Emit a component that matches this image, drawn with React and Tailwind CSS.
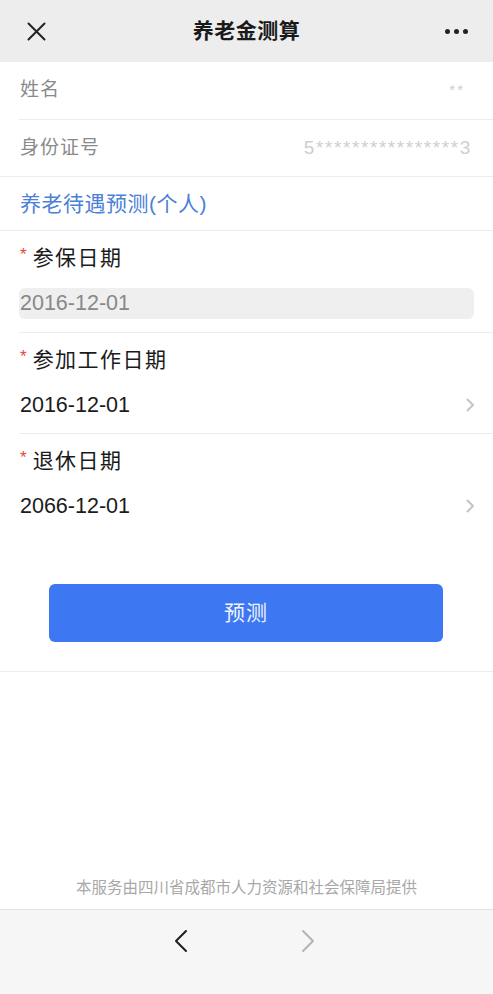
import React from "react";

const font = {
  fontFamily: '"Liberation Sans", "Noto Sans CJK SC", sans-serif',
};

const Chevron = () => (
  <svg width="9" height="14" viewBox="0 0 9 14" fill="none">
    <path d="M1.5 1.5 L7 7 L1.5 12.5" stroke="#c4c4c4" strokeWidth="2" strokeLinecap="round" strokeLinejoin="round" />
  </svg>
);

const Label = ({ children }) => (
  <div className="flex items-center h-[30px]">
    <span className="text-[#e5473c] text-[17px] leading-none ml-[1px] mr-[6px] -mt-[8px]">*</span>
    <span className="text-[21px] text-[#1b1b1b] tracking-[1.5px]">{children}</span>
  </div>
);

const DateRow = ({ label, value, divider }) => (
  <div className="pl-[19px]">
    <div className={`pt-[12px] pb-[13px] pr-[18px] ${divider ? "border-b border-[#ececec]" : ""}`}>
      <Label>{label}</Label>
      <div className="mt-[15px] h-[30px] flex items-center justify-between">
        <span className="text-[21.5px] text-[#1b1b1b] pl-px">{value}</span>
        <Chevron />
      </div>
    </div>
  </div>
);

export default function App() {
  return (
    <div className="h-[994px] flex flex-col bg-white" style={font}>
      {/* Header */}
      <div className="h-[62px] bg-[#ededed] flex items-center justify-between shrink-0">
        <div className="w-[80px] pl-[27px] flex items-center">
          <svg width="19" height="19" viewBox="0 0 19 19">
            <path d="M1.5 1.5 L17.5 17.5 M17.5 1.5 L1.5 17.5" stroke="#222" strokeWidth="2" strokeLinecap="round" />
          </svg>
        </div>
        <div className="text-[21px] font-bold text-[#1a1a1a] tracking-[0.5px]">养老金测算</div>
        <div className="w-[80px] pr-[25px] flex justify-end gap-[4px]">
          <span className="w-[5px] h-[5px] rounded-full bg-[#222]" />
          <span className="w-[5px] h-[5px] rounded-full bg-[#222]" />
          <span className="w-[5px] h-[5px] rounded-full bg-[#222]" />
        </div>
      </div>

      {/* Personal info */}
      <div className="pl-[19px]">
        <div className="h-[58px] flex items-center justify-between pl-px pr-[28px] border-b border-[#ececec]">
          <span className="text-[19px] text-[#8a8a8a] tracking-[1px]">姓名</span>
          <span className="text-[15px] text-[#cfcfcf] tracking-[2px]">**</span>
        </div>
      </div>
      <div className="h-[57px] flex items-center justify-between pl-[20px] pr-[21px] border-b border-[#ececec]">
        <span className="text-[19px] text-[#8a8a8a] tracking-[1px]">身份证号</span>
        <span className="text-[19px] text-[#cfcfcf] tracking-[1.6px]">5****************3</span>
      </div>
      <div className="h-[54px] flex items-center pl-[20px] border-b border-[#ececec]">
        <span className="text-[21px] text-[#4a80d8] tracking-[0.5px]">养老待遇预测(个人)</span>
      </div>

      {/* 参保日期 */}
      <div className="pl-[19px]">
        <div className="pt-[12px] pb-[13px] border-b border-[#ececec]">
          <Label>参保日期</Label>
          <div className="mt-[15px] mr-[19px] h-[31px] rounded-[6px] bg-[#efefef] flex items-center pl-px">
            <span className="text-[21.5px] text-[#888]">2016-12-01</span>
          </div>
        </div>
      </div>

      <DateRow label="参加工作日期" value="2016-12-01" divider />
      <DateRow label="退休日期" value="2066-12-01" />

      {/* Button */}
      <div className="pt-[50px] pb-[29px] border-b border-[#ececec]">
        <button className="ml-[49px] w-[394px] h-[58px] rounded-[6px] bg-[#3d78f2] text-[21px] text-[#eef3fe] tracking-[1px]">
          预测
        </button>
      </div>

      <div className="flex-1" />

      {/* Footer */}
      <div className="h-[20px] leading-[20px] text-center text-[15.5px] text-[#a8a8a8] mb-[11px]">
        本服务由四川省成都市人力资源和社会保障局提供
      </div>
      <div className="h-[85px] bg-[#f6f6f6] border-t border-[#e2e2e2] shrink-0 flex justify-center pt-[19px] gap-[113px]">
        <svg width="14" height="24" viewBox="0 0 14 24" className="-ml-[4px]">
          <path d="M12 2 L2 12 L12 22" stroke="#1f1f1f" strokeWidth="2" fill="none" strokeLinecap="round" strokeLinejoin="round" />
        </svg>
        <svg width="14" height="24" viewBox="0 0 14 24">
          <path d="M2 2 L12 12 L2 22" stroke="#b4b4b4" strokeWidth="2" fill="none" strokeLinecap="round" strokeLinejoin="round" />
        </svg>
      </div>
    </div>
  );
}
